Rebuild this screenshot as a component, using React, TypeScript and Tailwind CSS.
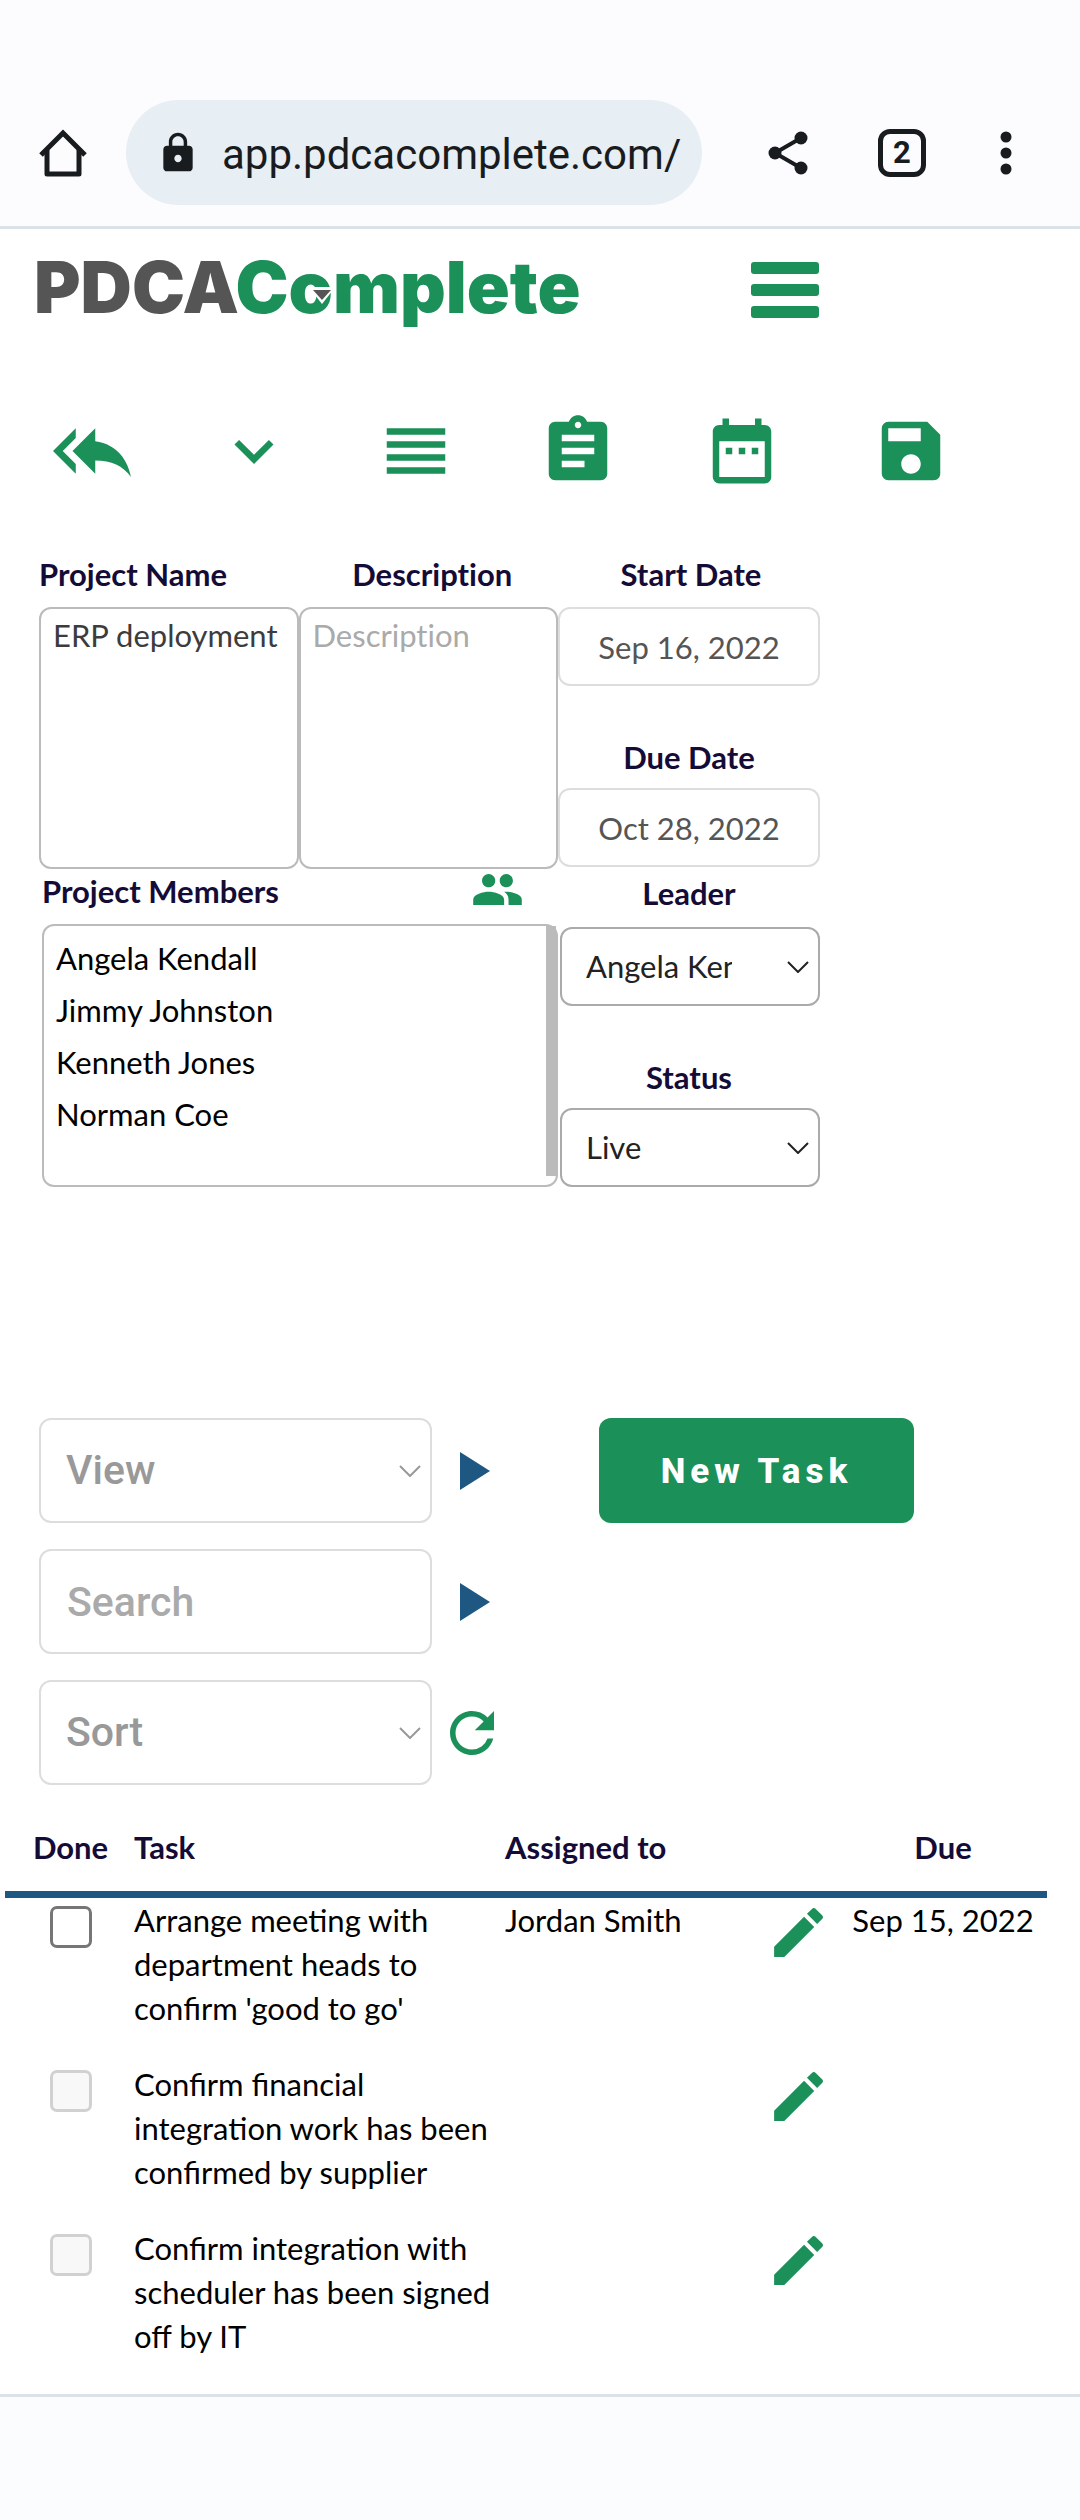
import { useState } from 'react';
import {
  MdAssignment,
  MdDateRange,
  MdEdit,
  MdExpandMore,
  MdGroup,
  MdLock,
  MdRefresh,
  MdReorder,
  MdReplyAll,
  MdSave,
} from 'react-icons/md';

const members = ['Angela Kendall', 'Jimmy Johnston', 'Kenneth Jones', 'Norman Coe'];

const tasks = [
  { id: 1, name: "Arrange meeting with department heads to confirm 'good to go'", assigned: 'Jordan Smith', due: 'Sep 15, 2022', locked: false },
  { id: 2, name: 'Confirm financial integration work has been confirmed by supplier', assigned: '', due: '', locked: true },
  { id: 3, name: 'Confirm integration with scheduler has been signed off by IT', assigned: '', due: '', locked: true },
];

const label = 'block text-[31px] leading-[44px] font-bold text-[#140c36]';

function Chevron({ className }: { className: string }) {
  return (
    <svg viewBox="0 0 22 12" className={`pointer-events-none absolute w-[22px] h-3 ${className}`} fill="none" stroke="currentColor" strokeWidth="2">
      <path d="M1 1l10 10L21 1" />
    </svg>
  );
}

function BrowserBar() {
  return (
    <header className="flex items-center bg-[#fcfcfe] border-b-3 border-[#dbe3e8] pt-[100px] pb-[21px] pl-[39px] text-[#191c1e] font-[Roboto,sans-serif]">
      <button aria-label="Home">
        <svg viewBox="0 0 48 48" className="size-12" fill="none" stroke="currentColor" strokeWidth="5" strokeLinejoin="round">
          <path d="M2 26L24 4l22 22" strokeLinejoin="miter" />
          <path d="M8 21v24h32V21" />
        </svg>
      </button>
      <div className="flex items-center w-[576px] h-[105px] ml-[39px] rounded-full bg-[#e7eef4] pl-[30px]">
        <MdLock className="size-[44px]" />
        <input aria-label="Address" className="w-[468px] ml-[22px] pt-1 text-[42px] leading-[56px] outline-none" defaultValue="app.pdcacomplete.com/" />
      </div>
      <button aria-label="Share" className="ml-[66px]">
        <svg viewBox="0 0 40 44" className="w-10 h-11" fill="currentColor">
          <path d="M33 7L7 22l26 15" fill="none" stroke="currentColor" strokeWidth="4" />
          <circle cx="33" cy="7" r="6.5" />
          <circle cx="7" cy="22" r="6.5" />
          <circle cx="33" cy="37" r="6.5" />
        </svg>
      </button>
      <button aria-label="Tabs" className="size-12 ml-[70px] rounded-xl border-5 border-current text-[31px] leading-[38px] font-bold">
        2
      </button>
      <button aria-label="More" className="ml-[74px]">
        <svg viewBox="0 0 12 44" className="w-3 h-11" fill="currentColor">
          <circle cx="6" cy="6" r="5.5" />
          <circle cx="6" cy="22" r="5.5" />
          <circle cx="6" cy="38" r="5.5" />
        </svg>
      </button>
    </header>
  );
}

function Logo() {
  return (
    <a href="#" aria-label="PDCAComplete" className="relative w-[717px] pb-1.5 text-[71px] leading-[80px] font-black text-[#555] font-[Inter,sans-serif]">
      PDCA<span className="text-[#1c9059]">Complete</span>
      <svg viewBox="0 0 22 17" className="absolute left-[277px] top-10 w-[22px] h-[17px]">
        <path d="M0 0h22v3L11 17 0 3z" fill="#fff" />
        <path d="M2 3h18l-9 10z" fill="#555" />
      </svg>
    </a>
  );
}

function ProjectForm() {
  return (
    <section className="flex pt-[62px] pl-[39px] [font-variant-ligatures:none]">
      <div className="w-[519px]">
        <div className="flex">
          <div className="flex-1">
            <label htmlFor="name" className={label}>Project Name</label>
            <textarea id="name" defaultValue="ERP deployment" className="block w-full h-[262px] mt-[11px] px-3 py-1 border-2 border-[#bbb] rounded-xl resize-none text-[31px] leading-[44px] text-[#3c3c3c]" />
          </div>
          <div className="flex-1">
            <label htmlFor="desc" className={`${label} pl-2 text-center`}>Description</label>
            <textarea id="desc" placeholder="Description" className="block w-full h-[262px] mt-[11px] px-3 py-1 border-2 border-[#bbb] rounded-xl resize-none text-[31px] leading-[44px] placeholder:text-[#aaa]" />
          </div>
        </div>
        <div className="pl-[3px]">
          <div className="flex items-center h-11 pr-[34px]">
            <h2 className={`${label} flex-1`}>Project Members</h2>
            <button aria-label="Edit members" className="pb-1">
              <MdGroup className="size-[53px] text-[#1c9059]" />
            </button>
          </div>
          <div className="flex h-[263px] mt-[11px] border-2 border-[#bbb] rounded-xl">
            <ul className="flex-1 pt-1.5 pl-3 text-[31px] leading-[52px] text-black">
              {members.map((m) => (
                <li key={m}>{m}</li>
              ))}
            </ul>
            <div className="w-[10px] h-[250px] bg-[#bbb]" />
          </div>
        </div>
      </div>

      <div className="w-[262px] text-center">
        <label htmlFor="start" className={`${label} pl-1`}>Start Date</label>
        <input id="start" defaultValue="Sep 16, 2022" className="block w-full h-[79px] mt-[11px] border-2 border-[#ddd] rounded-xl text-center text-[31px] text-[#555]" />
        <label htmlFor="due" className={`${label} mt-[49px]`}>Due Date</label>
        <input id="due" defaultValue="Oct 28, 2022" className="block w-full h-[79px] mt-[9px] border-2 border-[#ddd] rounded-xl text-center text-[31px] text-[#555]" />
        <label htmlFor="leader" className={`${label} mt-1`}>Leader</label>
        <div className="relative mt-3 ml-0.5">
          <select id="leader" className="block w-full h-[79px] pl-6 pr-[86px] appearance-none border-2 border-[#aaa] rounded-xl text-[31px] text-[#222]">
            {members.map((m) => (
              <option key={m}>{m}</option>
            ))}
          </select>
          <Chevron className="right-[11px] top-[34px] text-[#222]" />
        </div>
        <label htmlFor="status" className={`${label} mt-[49px]`}>Status</label>
        <div className="relative mt-[9px] ml-0.5">
          <select id="status" className="block w-full h-[79px] pl-6 pr-[86px] appearance-none border-2 border-[#aaa] rounded-xl text-[31px] text-[#222]">
            <option>Live</option>
            <option>Closed</option>
          </select>
          <Chevron className="right-[11px] top-[34px] text-[#222]" />
        </div>
      </div>
    </section>
  );
}

function PlayButton({ name }: { name: string }) {
  return (
    <button aria-label={name} className="ml-7">
      <svg viewBox="0 0 30 38" className="w-[30px] h-[38px]" fill="#1f5783">
        <path d="M0 0l30 19L0 38z" />
      </svg>
    </button>
  );
}

function Filters() {
  return (
    <section className="flex flex-col gap-[26px] pt-[231px] pl-[39px] font-[Roboto,sans-serif]">
      <div className="flex items-center">
        <div className="relative w-[393px]">
          <select aria-label="View" className="block w-full h-[105px] px-[25px] appearance-none border-2 border-[#ddd] rounded-xl text-[41px] font-medium text-[#999]">
            <option>View</option>
          </select>
          <Chevron className="right-[11px] top-[47px] text-[#999]" />
        </div>
        <PlayButton name="Apply view" />
        <button className="w-[315px] h-[105px] ml-[109px] rounded-xl bg-[#1c9059] pt-1 text-white text-[35px] font-extrabold tracking-[5px]">
          New Task
        </button>
      </div>
      <div className="flex items-center">
        <input aria-label="Search" placeholder="Search" className="w-[393px] h-[105px] px-[26px] border-2 border-[#ddd] rounded-xl text-[41px] font-medium placeholder:text-[#aaa]" />
        <PlayButton name="Run search" />
      </div>
      <div className="flex items-center">
        <div className="relative w-[393px]">
          <select aria-label="Sort" className="block w-full h-[105px] px-[25px] appearance-none border-2 border-[#ddd] rounded-xl text-[41px] font-medium text-[#999]">
            <option>Sort</option>
          </select>
          <Chevron className="right-[11px] top-[47px] text-[#999]" />
        </div>
        <button aria-label="Refresh" className="ml-[7px]">
          <MdRefresh className="size-[66px] text-[#1c9059]" />
        </button>
      </div>
    </section>
  );
}

function TaskTable() {
  const [done, setDone] = useState<number[]>([]);

  const toggle = (id: number) => {
    setDone(done.includes(id) ? done.filter((d) => d !== id) : [...done, id]);
  };

  return (
    <section className="pt-10 pl-[5px] pr-[33px]">
      <table className="w-full table-fixed text-[31px] leading-[44px] text-black">
        <thead className="text-left text-[#140c36]">
          <tr className="border-b-7 border-[#1f5783]">
            <th className="w-[129px] pl-0.5 pb-[22px] text-center">Done</th>
            <th className="w-[371px] pb-[22px]">Task</th>
            <th className="w-[261px] pb-[22px]">Assigned to</th>
            <th className="w-[73px]" />
            <th className="pb-[22px] text-center">Due</th>
          </tr>
        </thead>
        <tbody>
          {tasks.map((t) => (
            <tr key={t.id} className="align-top">
              <td className="pl-0.5 pt-2">
                <input
                  type="checkbox"
                  aria-label={t.name}
                  checked={done.includes(t.id)}
                  disabled={t.locked}
                  onChange={() => toggle(t.id)}
                  className="block mx-auto size-[42px] appearance-none rounded-[7px] border-3 border-[#767676] checked:bg-[#1c9059] disabled:border-[#d1d1d1] disabled:bg-[#f8f8f8]"
                />
              </td>
              <td className="pb-8">{t.name}</td>
              <td>{t.assigned}</td>
              <td>
                <button aria-label="Edit task" className="block pt-0.5">
                  <MdEdit className="size-[65px] text-[#1c9059]" />
                </button>
              </td>
              <td className="text-center">{t.due}</td>
            </tr>
          ))}
        </tbody>
      </table>
    </section>
  );
}

export default function App() {
  return (
    <div className="bg-white font-[Lato,sans-serif]">
      <BrowserBar />
      <main>
        {/* Brand row */}
        <div className="flex items-center h-[122px] pl-[34px]">
          <Logo />
          <button aria-label="Menu" className="flex flex-col gap-[10px]">
            <span className="w-[68px] h-3 rounded-[3px] bg-[#1c9059]" />
            <span className="w-[68px] h-3 rounded-[3px] bg-[#1c9059]" />
            <span className="w-[68px] h-3 rounded-[3px] bg-[#1c9059]" />
          </button>
        </div>

        {/* Toolbar */}
        <nav className="flex gap-[86px] pt-[61px] pl-[53px] text-[78px] text-[#1c9059]">
          <div className="flex gap-[84px]">
            <button aria-label="Back"><MdReplyAll /></button>
            <button aria-label="Expand"><MdExpandMore /></button>
            <button aria-label="List"><MdReorder /></button>
            <button aria-label="Notes"><MdAssignment /></button>
          </div>
          <div className="flex gap-[91px]">
            <button aria-label="Calendar"><MdDateRange /></button>
            <button aria-label="Save"><MdSave /></button>
          </div>
        </nav>

        <ProjectForm />
        <Filters />
        <TaskTable />
      </main>
      <footer className="h-[126px] mt-1 border-t-3 border-[#dbe3e8] bg-[#fbfcfe]" />
    </div>
  );
}
